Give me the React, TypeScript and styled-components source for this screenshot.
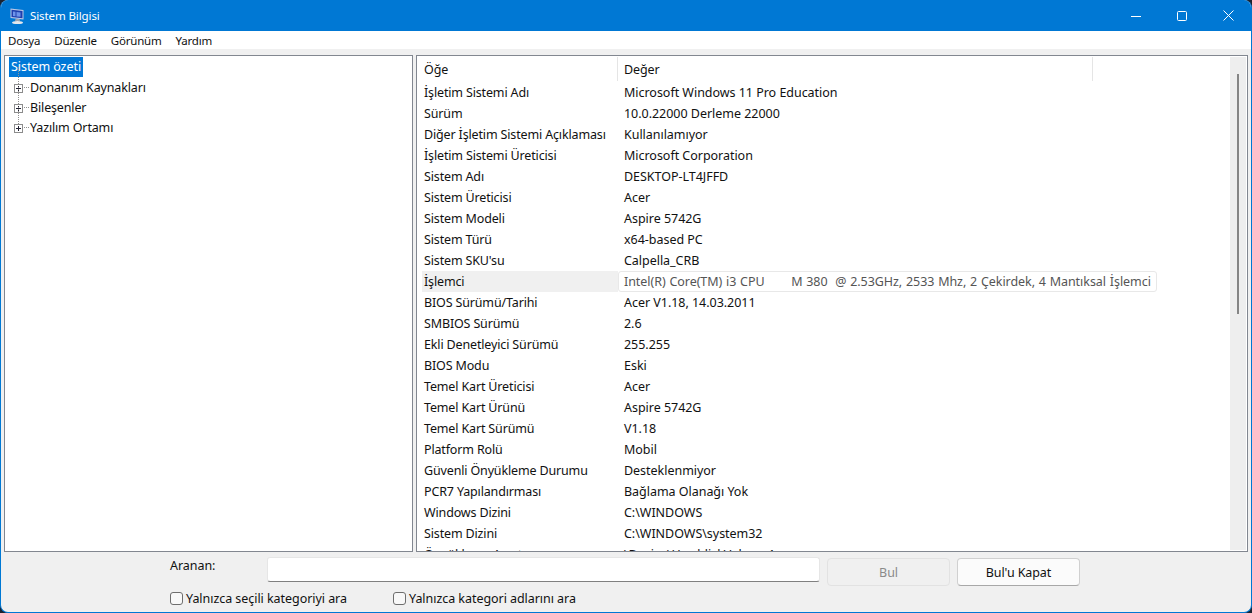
import React from "react";
import styled, { createGlobalStyle } from "styled-components";

const Global = createGlobalStyle`
  html, body { margin: 0; padding: 0; background: #1b2330; }
  body { width: 1252px; height: 613px; overflow: hidden; font-family: "Noto Sans", "Open Sans", sans-serif; }
  * { box-sizing: border-box; }
`;

const Win = styled.div`
  width: 1252px; height: 613px; display: flex; flex-direction: column;
  border-radius: 8px; overflow: hidden; border: 1px solid #0078d4; border-top: 0; background: #f0f0f0;
  color: #111; font-size: 12.5px; letter-spacing: -0.1px;
`;
const TitleBar = styled.div`
  height: 31px; flex: none; background: #0078d4; color: #fff; display: flex; align-items: center;
  padding-left: 8px; margin: 0 -1px;
`;
const AppIcon = styled.svg` width: 18px; height: 18px; flex: none; `;
const TitleText = styled.span` margin-left: 4px; font-size: 11.5px; `;
const WinButtons = styled.div` margin-left: auto; margin-right: 1px; display: flex; height: 100%; `;
const WinButton = styled.div`
  width: 46px; height: 100%; display: flex; align-items: center; justify-content: center;
`;
const MenuBar = styled.div`
  height: 18px; flex: none; background: #fff; display: flex; align-items: center; padding-left: 7px; gap: 14px;
  font-size: 11.5px; letter-spacing: -0.2px;
`;
const Body = styled.div`
  height: 503px; flex: none; display: flex; gap: 3px; padding: 6px 3px 0 3px;
`;
const TreePanel = styled.div`
  width: 409px; height: 497px; background: #fff; border: 1px solid #828790; padding: 1px 4px; flex: none;
  letter-spacing: -0.15px;
`;
const TreeRow = styled.div`
  height: 20px; display: flex; align-items: center; position: relative; padding-left: 21px;
`;
const Selected = styled.span`
  background: #0078d7; color: #fff; margin-left: -21px; height: 20px; padding: 0 2px; line-height: 20px; display: inline-block;
  letter-spacing: -0.05px;
`;
const Dots = styled.span`
  position: absolute; left: 9px; top: -10px; height: 21px; width: 11px;
  border-left: 1px dotted #8f8f8f;
  &::after { content: ""; position: absolute; left: 0; top: 20px; width: 10px; border-top: 1px dotted #8f8f8f; }
`;
const Expander = styled.span`
  position: absolute; left: 5px; top: 7px; width: 9px; height: 9px; border: 1px solid #8c8c8c; background: #fff;
  &::before { content: ""; position: absolute; left: 1px; top: 3px; width: 5px; height: 1px; background: #223; }
  &::after { content: ""; position: absolute; left: 3px; top: 1px; width: 1px; height: 5px; background: #223; }
`;
const ListPanel = styled.div`
  width: 832px; height: 497px; background: #fff; border: 1px solid #828790; flex: none; display: flex; overflow: hidden;
`;
const ListArea = styled.div` flex: 1; min-width: 0; padding: 1px 0 0 5px; overflow: hidden; `;
const HeaderRow = styled.div` height: 25px; display: flex; align-items: center; `;
const HeaderCell = styled.div<{ $w: number }>`
  width: ${p => p.$w}px; height: 24px; padding-left: ${p => (p.$w > 200 ? 6 : 2)}px; line-height: 25px; border-right: 1px solid #e5e5e5; flex: none; align-self: flex-start;
`;
const Row = styled.div`
  height: 21px; display: flex; align-items: center; white-space: pre;
`;
const NameCell = styled.div<{ $hot?: boolean }>`
  width: 196px; height: 21px; padding-left: 2px; line-height: 21px; flex: none; letter-spacing: -0.15px;
  background: ${p => (p.$hot ? "#f0f0f0" : "transparent")};
`;
const ValueCell = styled.div<{ $hot?: boolean }>`
  height: 21px; padding-left: 6px; line-height: ${p => (p.$hot ? "19px" : "21px")}; flex: none; letter-spacing: -0.03px;
  ${p => p.$hot ? "width: 539px; border: 1px solid #e8e8e8; border-radius: 3px; color: #555; letter-spacing: -0.05px; word-spacing: 0.6px; padding-left: 5px;" : ""}
`;
const Scrollbar = styled.div`
  width: 16px; margin: 1px 1px 1px 0; background: #eeeeee; flex: none; display: flex; justify-content: center; padding-top: 17px;
`;
const Thumb = styled.div` width: 2px; height: 240px; background: #858585; `;
const Search = styled.div`
  flex: 1; display: grid; grid-template-columns: 90px 553px 123px 123px; column-gap: 7px; grid-template-rows: 30px 24px;
  padding: 5px 0 0 169px; align-content: start;
`;
const SearchLabel = styled.div` line-height: 17px; font-size: 12.5px; letter-spacing: -0.05px; `;
const SearchInput = styled.div`
  height: 25px; background: #fff; border: 1px solid #e6e6e6; border-bottom-color: #808080; border-radius: 3px;
`;
const Btn = styled.div<{ $off?: boolean }>`
  height: 28px; margin-top: 1px; border-radius: 4px; display: flex; align-items: center; justify-content: center; font-size: 12.5px;
  background: ${p => (p.$off ? "#f0f0f0" : "#fbfbfb")};
  color: ${p => (p.$off ? "#8a8a8a" : "#111")};
  border: 1px solid ${p => (p.$off ? "#e2e2e2" : "#d0d0d0")};
  ${p => (p.$off ? "" : "border-bottom-color: #a8a8a8;")}
`;
const Checks = styled.div` grid-column: 1 / -1; display: flex; padding-top: 1px; `;
const Check = styled.label<{ $w: number }>`
  width: ${p => p.$w}px; display: flex; align-items: center; gap: 3px; font-size: 12.5px; height: 20px; letter-spacing: -0.05px;
`;
const Box = styled.span`
  width: 13px; height: 13px; border: 1px solid #6e6e6e; border-radius: 3px; background: #f8f8f8; flex: none;
`;

const rows: [string, string][] = [
  ["İşletim Sistemi Adı", "Microsoft Windows 11 Pro Education"],
  ["Sürüm", "10.0.22000 Derleme 22000"],
  ["Diğer İşletim Sistemi Açıklaması", "Kullanılamıyor"],
  ["İşletim Sistemi Üreticisi", "Microsoft Corporation"],
  ["Sistem Adı", "DESKTOP-LT4JFFD"],
  ["Sistem Üreticisi", "Acer"],
  ["Sistem Modeli", "Aspire 5742G"],
  ["Sistem Türü", "x64-based PC"],
  ["Sistem SKU'su", "Calpella_CRB"],
  ["İşlemci", "Intel(R) Core(TM) i3 CPU       M 380  @ 2.53GHz, 2533 Mhz, 2 Çekirdek, 4 Mantıksal İşlemci"],
  ["BIOS Sürümü/Tarihi", "Acer V1.18, 14.03.2011"],
  ["SMBIOS Sürümü", "2.6"],
  ["Ekli Denetleyici Sürümü", "255.255"],
  ["BIOS Modu", "Eski"],
  ["Temel Kart Üreticisi", "Acer"],
  ["Temel Kart Ürünü", "Aspire 5742G"],
  ["Temel Kart Sürümü", "V1.18"],
  ["Platform Rolü", "Mobil"],
  ["Güvenli Önyükleme Durumu", "Desteklenmiyor"],
  ["PCR7 Yapılandırması", "Bağlama Olanağı Yok"],
  ["Windows Dizini", "C:\\WINDOWS"],
  ["Sistem Dizini", "C:\\WINDOWS\\system32"],
  ["Önyükleme Aygıtı", "\\Device\\HarddiskVolume1"],
];

const tree = ["Donanım Kaynakları", "Bileşenler", "Yazılım Ortamı"];

export default function App() {
  return (
    <>
      <Global />
      <Win>
        <TitleBar>
          <AppIcon viewBox="0 0 18 18">
            <path d="M2.5 1.5 15.5 3v9.5L2.5 11z" fill="#b9c6e6" />
            <path d="M3.5 2.7 14.5 4v7.3L3.5 10z" fill="#1f3fae" />
            <path d="M5 4.5l2.5.3v4.4L5 8.9zM8.5 5l4 .5v4.3l-4-.4z" fill="#6f94ea" />
            <path d="M7.5 12h4l.8 2.5h-5.5z" fill="#9aa2ad" />
            <ellipse cx="9.5" cy="15.5" rx="5.5" ry="1.6" fill="#e4e7ec" />
          </AppIcon>
          <TitleText>Sistem Bilgisi</TitleText>
          <WinButtons>
            <WinButton>
              <svg width="10" height="10" viewBox="0 0 10 10"><path d="M0 5.5h10" stroke="#fff" strokeWidth="1" /></svg>
            </WinButton>
            <WinButton>
              <svg width="10" height="10" viewBox="0 0 10 10"><rect x=".5" y=".5" width="9" height="9" rx="1" fill="none" stroke="#fff" /></svg>
            </WinButton>
            <WinButton>
              <svg width="11" height="11" viewBox="0 0 11 11"><path d="M.5.5l10 10M10.5.5l-10 10" stroke="#fff" strokeWidth="1" /></svg>
            </WinButton>
          </WinButtons>
        </TitleBar>
        <MenuBar>
          <span>Dosya</span>
          <span>Düzenle</span>
          <span>Görünüm</span>
          <span>Yardım</span>
        </MenuBar>
        <Body>
          <TreePanel>
            <TreeRow><Selected>Sistem özeti</Selected></TreeRow>
            {tree.map(t => (
              <TreeRow key={t}>
                <Dots />
                <Expander />
                {t}
              </TreeRow>
            ))}
          </TreePanel>
          <ListPanel>
            <ListArea>
              <HeaderRow>
                <HeaderCell $w={196}>Öğe</HeaderCell>
                <HeaderCell $w={475}>Değer</HeaderCell>
              </HeaderRow>
              {rows.map(([n, v]) => (
                <Row key={n}>
                  <NameCell $hot={n === "İşlemci"}>{n}</NameCell>
                  <ValueCell $hot={n === "İşlemci"}>{v}</ValueCell>
                </Row>
              ))}
            </ListArea>
            <Scrollbar><Thumb /></Scrollbar>
          </ListPanel>
        </Body>
        <Search>
          <SearchLabel>Aranan:</SearchLabel>
          <SearchInput />
          <Btn $off>Bul</Btn>
          <Btn>Bul'u Kapat</Btn>
          <Checks>
            <Check $w={223}><Box />Yalnızca seçili kategoriyi ara</Check>
            <Check $w={300}><Box />Yalnızca kategori adlarını ara</Check>
          </Checks>
        </Search>
      </Win>
    </>
  );
}
